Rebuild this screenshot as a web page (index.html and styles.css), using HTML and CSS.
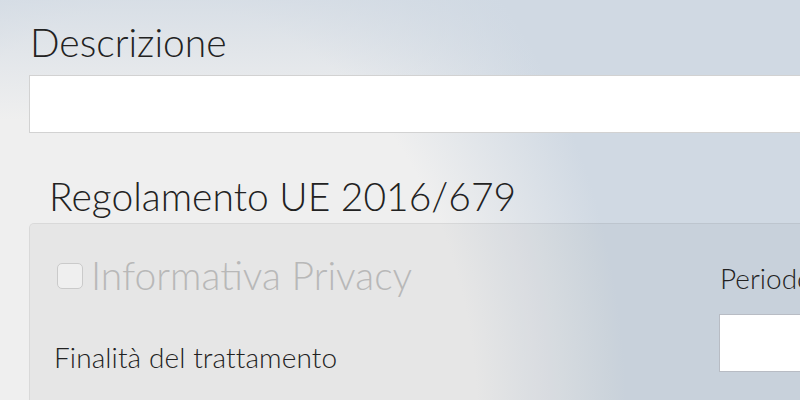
FILE: index.html
```html
<!DOCTYPE html>
<html>
<head lang="it">
    <meta charset="UTF-8">
    <title>Modulo</title>
    <link rel="stylesheet" href="styles.css">
</head>
<body>
<div class="form">
    <label class="big-label" for="descrizione">Descrizione</label>
    <input type="text" id="descrizione" class="text-field wide">

    <div class="legend">Regolamento UE 2016/679</div>
    <div class="well">
        <div class="col-left">
            <label class="check-row">
                <input type="checkbox" class="check" disabled>
                <span class="check-label">Informativa Privacy</span>
            </label>
            <div class="small-label">Finalità del trattamento</div>
        </div>
        <div class="col-right">
            <div class="small-label">Periodo di conservazione</div>
            <input type="text" class="text-field short">
        </div>
    </div>
</div>
</body>
</html>
```

FILE: styles.css
```css
* { margin: 0; padding: 0; box-sizing: border-box;}
html, body { height: 100%; overflow: hidden;}
body { color: #222; font-family: "Lato", "Open Sans", sans-serif; font-weight: 300;
    background:
        linear-gradient(to bottom, rgba(208,217,227,0.75), rgba(208,217,227,0) 120px),
        radial-gradient(ellipse 440px 580px at 160px 420px, #efefef 72%, #d0d9e3 106%);
    background-color: #efefef; background-repeat: no-repeat;}
.form { padding: 20px 0 0 29px; width: 1100px;}
.big-label { display: block; font-size: 39px; line-height: 44px; margin-left: 1px;}
.text-field { display: block; height: 58px; border: 1px solid #d2d2d2; background: #fff;
    outline: none;}
.wide { width: 100%; margin-top: 11px;}
.legend { font-size: 39px; line-height: 44px; margin: 41px 0 5px 20px;}
.well { display: flex; background: rgba(0,0,0,0.037); border: 1px solid rgba(0,0,0,0.06);
    border-radius: 5px; padding: 29px 0 60px 24px;}
.col-left { width: 665px; flex-shrink: 0;}
.check-row { display: flex; align-items: center; height: 44px;}
.check { appearance: none; -webkit-appearance: none; width: 26px; height: 26px;
    margin: 2px 8px 0 3px; border: 1px solid #cacaca; border-radius: 5px; background: #efefef;}
.check-label { font-size: 39px; line-height: 44px; color: #b8b8b8;}
.small-label { font-size: 28px; line-height: 34px; white-space: nowrap;}
.col-left .small-label { margin-top: 43px; letter-spacing: 0.1px;}
.col-right { padding-top: 8px;}
.col-right .small-label { margin-left: 1px;}
.short { width: 300px; margin-top: 19px; border-color: #b8bcc4;}
```
